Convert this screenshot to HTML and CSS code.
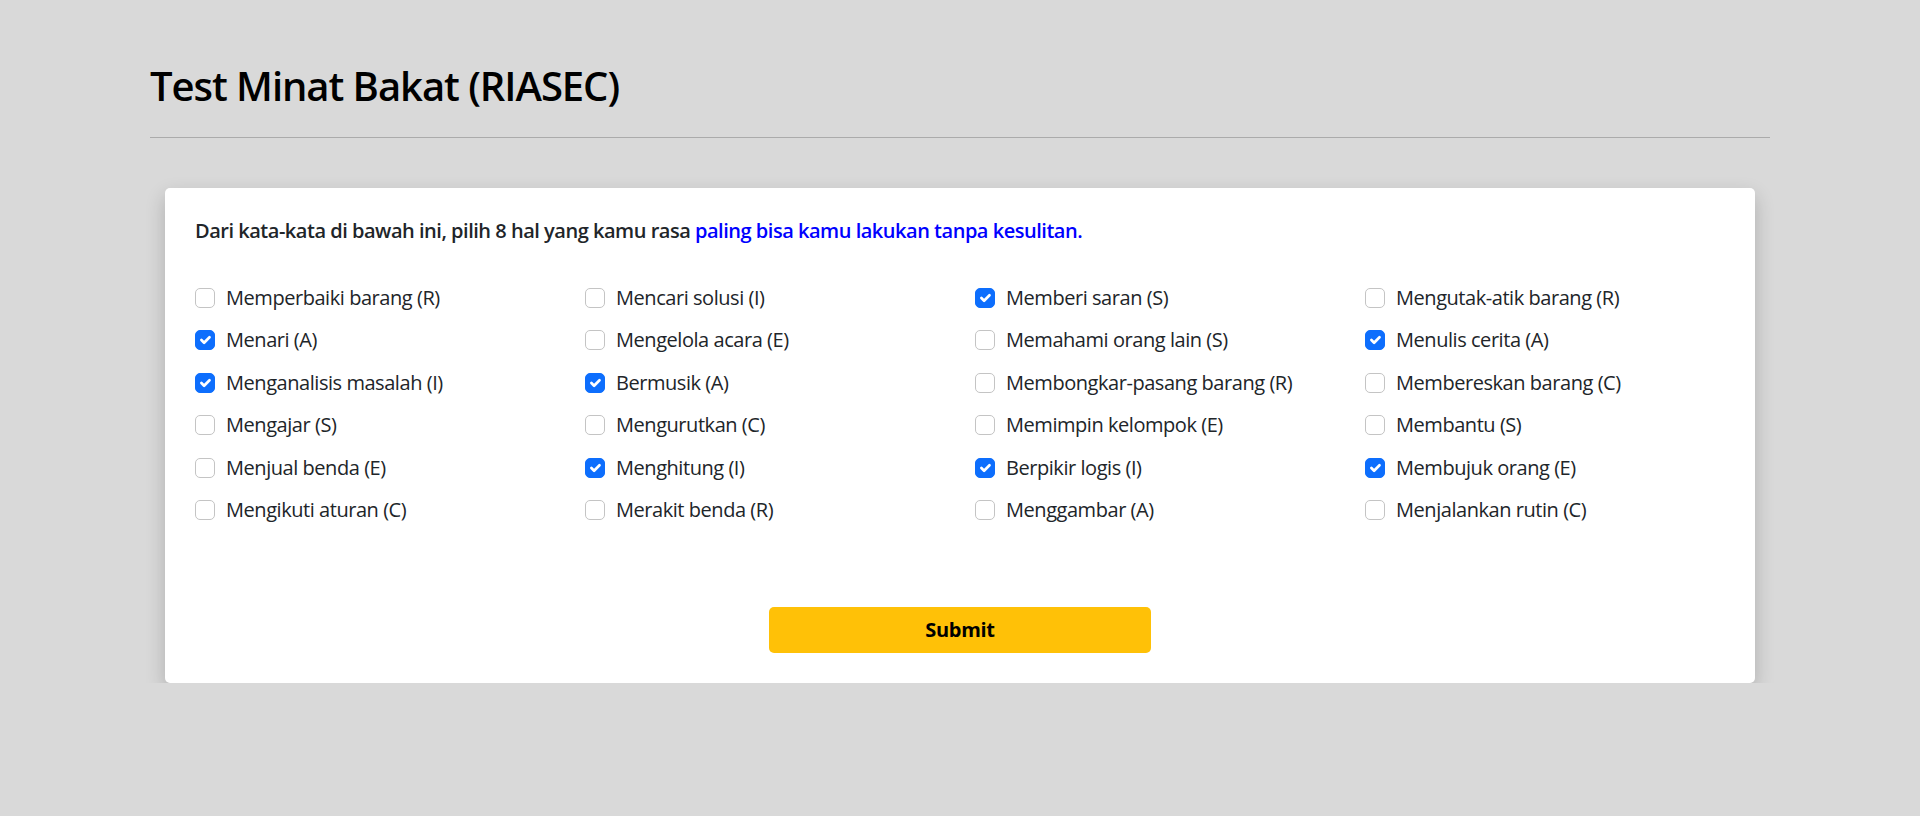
FILE: index.html
```html
<!DOCTYPE html>
<html lang="id">
<head>
<meta charset="utf-8">
<title>Test Minat Bakat (RIASEC)</title>
<link rel="stylesheet" href="styles.css">
</head>
<body>
<main class="container">
  <h1 class="title">Test Minat Bakat (RIASEC)</h1>
  <hr class="divider">
  <form class="card">
    <p class="lead">Dari kata-kata di bawah ini, pilih 8 hal yang kamu rasa <span class="accent">paling bisa kamu lakukan tanpa kesulitan.</span></p>
    <div class="options">
      <label class="opt"><span class="box"></span>Memperbaiki barang (R)</label>
      <label class="opt"><span class="box"></span>Mencari solusi (I)</label>
      <label class="opt"><span class="box on"><svg viewBox="0 0 20 20"><path d="m6 10 3 3 6-6"/></svg></span>Memberi saran (S)</label>
      <label class="opt"><span class="box"></span>Mengutak-atik barang (R)</label>

      <label class="opt"><span class="box on"><svg viewBox="0 0 20 20"><path d="m6 10 3 3 6-6"/></svg></span>Menari (A)</label>
      <label class="opt"><span class="box"></span>Mengelola acara (E)</label>
      <label class="opt"><span class="box"></span>Memahami orang lain (S)</label>
      <label class="opt"><span class="box on"><svg viewBox="0 0 20 20"><path d="m6 10 3 3 6-6"/></svg></span>Menulis cerita (A)</label>

      <label class="opt"><span class="box on"><svg viewBox="0 0 20 20"><path d="m6 10 3 3 6-6"/></svg></span>Menganalisis masalah (I)</label>
      <label class="opt"><span class="box on"><svg viewBox="0 0 20 20"><path d="m6 10 3 3 6-6"/></svg></span>Bermusik (A)</label>
      <label class="opt"><span class="box"></span>Membongkar-pasang barang (R)</label>
      <label class="opt"><span class="box"></span>Membereskan barang (C)</label>

      <label class="opt"><span class="box"></span>Mengajar (S)</label>
      <label class="opt"><span class="box"></span>Mengurutkan (C)</label>
      <label class="opt"><span class="box"></span>Memimpin kelompok (E)</label>
      <label class="opt"><span class="box"></span>Membantu (S)</label>

      <label class="opt"><span class="box"></span>Menjual benda (E)</label>
      <label class="opt"><span class="box on"><svg viewBox="0 0 20 20"><path d="m6 10 3 3 6-6"/></svg></span>Menghitung (I)</label>
      <label class="opt"><span class="box on"><svg viewBox="0 0 20 20"><path d="m6 10 3 3 6-6"/></svg></span>Berpikir logis (I)</label>
      <label class="opt"><span class="box on"><svg viewBox="0 0 20 20"><path d="m6 10 3 3 6-6"/></svg></span>Membujuk orang (E)</label>

      <label class="opt"><span class="box"></span>Mengikuti aturan (C)</label>
      <label class="opt"><span class="box"></span>Merakit benda (R)</label>
      <label class="opt"><span class="box"></span>Menggambar (A)</label>
      <label class="opt"><span class="box"></span>Menjalankan rutin (C)</label>
    </div>
    <div class="actions">
      <button type="button" class="submit">Submit</button>
    </div>
  </form>
</main>
</body>
</html>
```

FILE: styles.css
```css
html, body {
  margin: 0;
  padding: 0;
}
body {
  background: #d9d9d9;
  font-family: "Segoe UI", "Open Sans", "Noto Sans", sans-serif;
  color: #212529;
}
.container {
  width: 1620px;
  margin: 0 auto;
  padding-top: 62px;
}
.title {
  margin: 0;
  font-size: 40px;
  line-height: 48px;
  font-weight: 600;
  letter-spacing: -1.05px;
  color: #000;
}
.divider {
  margin: 27px 0 0;
  border: 0;
  border-top: 1px solid #ababab;
  height: 0;
}
.card {
  margin: 50px 15px 0;
  background: #fff;
  border-radius: 5px;
  box-shadow: 0 8px 20px rgba(0, 0, 0, 0.2);
  padding: 28px 30px 30px;
}
.lead {
  margin: 0;
  font-size: 20px;
  line-height: 30px;
  font-weight: 600;
  letter-spacing: -0.48px;
}
.accent {
  color: #0000ff;
}
.options {
  margin-top: 37px;
  display: grid;
  grid-template-columns: repeat(4, 360px);
  column-gap: 30px;
  row-gap: 12.4px;
}
.opt {
  display: flex;
  align-items: center;
  height: 30px;
  font-size: 20px;
  line-height: 30px;
  letter-spacing: -0.45px;
  white-space: nowrap;
}
.box {
  width: 20px;
  height: 20px;
  box-sizing: border-box;
  border: 1px solid #c4c4c4;
  border-radius: 5px;
  margin-right: 11px;
  flex: none;
  display: flex;
  align-items: center;
  justify-content: center;
  background: #fff;
}
.box.on {
  background: #0d6efd;
  border-color: #0d6efd;
}
.box svg {
  width: 20px;
  height: 20px;
  fill: none;
  stroke: #fff;
  stroke-width: 3;
  stroke-linecap: round;
  stroke-linejoin: round;
}
.actions {
  margin-top: 82px;
  display: flex;
  justify-content: center;
}
.submit {
  width: 382px;
  height: 46px;
  border: 0;
  border-radius: 5px;
  background: #ffc107;
  color: #000;
  font-family: inherit;
  font-size: 20px;
  font-weight: 700;
  letter-spacing: -0.3px;
}
```
